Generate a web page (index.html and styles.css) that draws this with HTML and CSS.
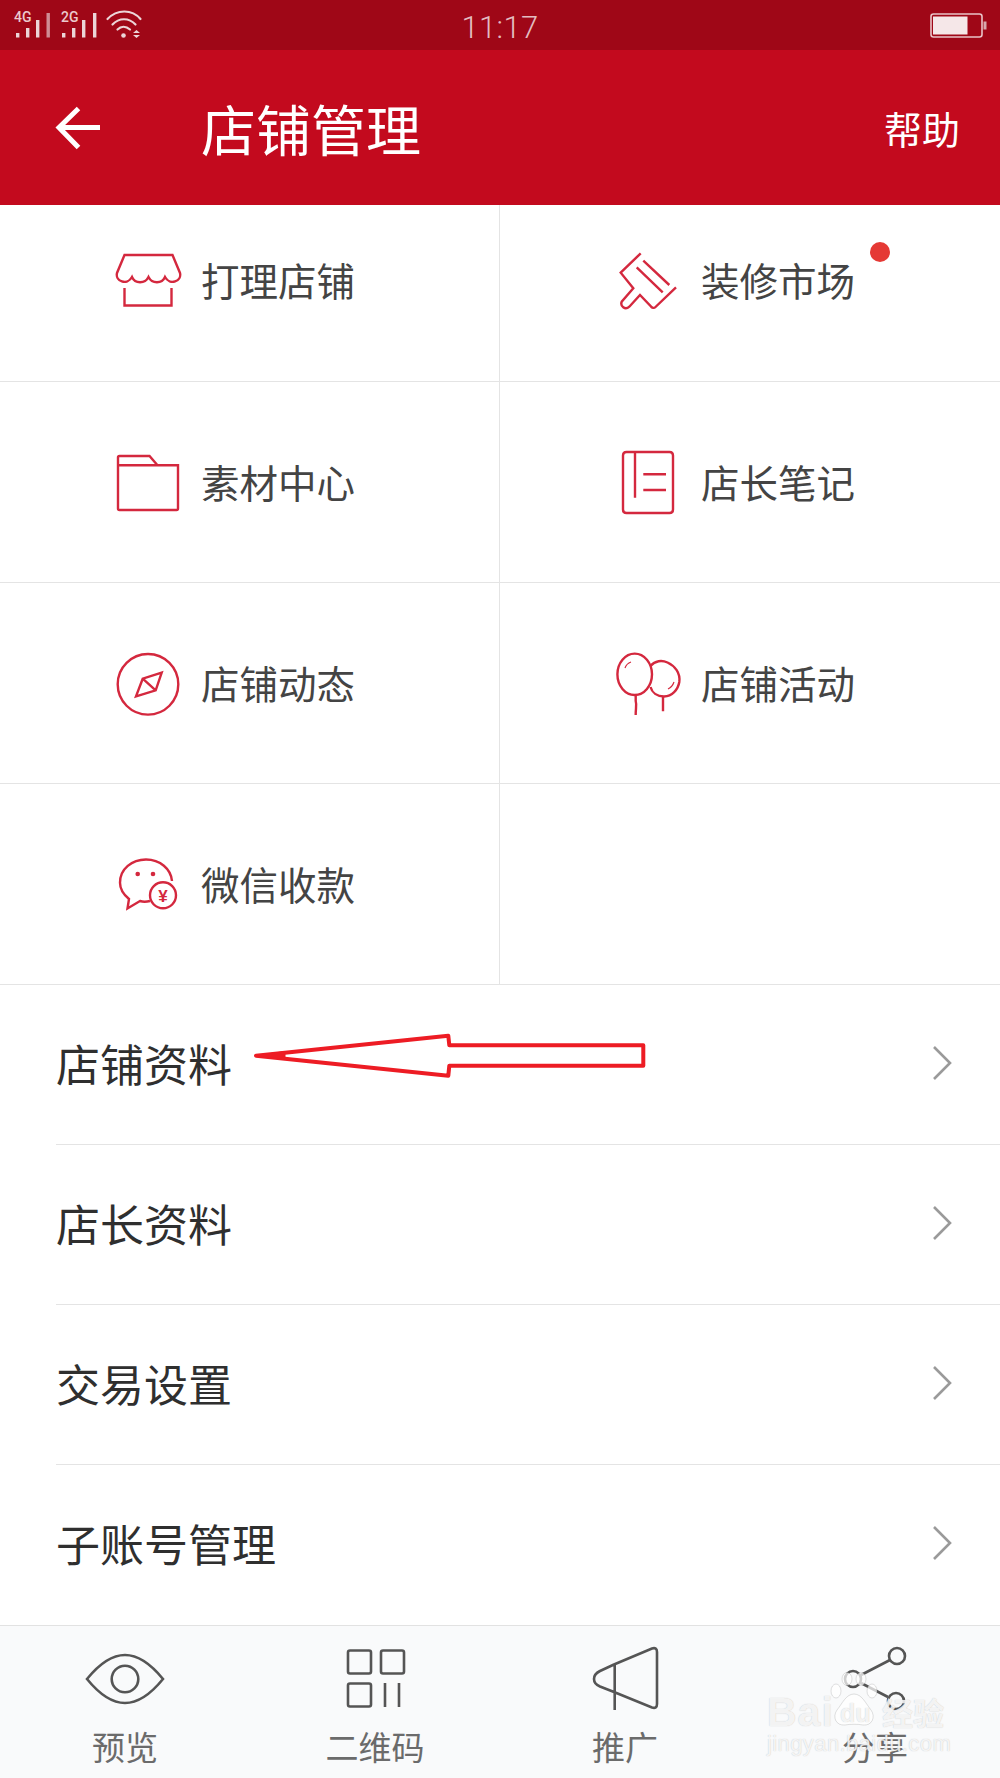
FILE: index.html
```html
<!DOCTYPE html>
<html lang="zh-CN">
<head>
<meta charset="utf-8">
<title>店铺管理</title>
<link rel="stylesheet" href="styles.css">
</head>
<body>
<div class="page">
  <div class="status">
    <svg class="status-left" viewBox="0 0 150 50" width="150" height="50">
      <text class="net" x="14" y="22">4G</text>
      <rect class="sig" x="16" y="33" width="3.4" height="4.5"/>
      <rect class="sig" x="26" y="28" width="3.4" height="9.5"/>
      <rect class="sig" x="36" y="20" width="3.4" height="17.5"/>
      <rect class="sig dim" x="46.5" y="13" width="3.4" height="24.5"/>
      <text class="net" x="61" y="22">2G</text>
      <rect class="sig" x="62" y="33" width="3.4" height="4.5"/>
      <rect class="sig" x="72" y="28" width="3.4" height="9.5"/>
      <rect class="sig" x="82" y="20" width="3.4" height="17.5"/>
      <rect class="sig" x="93" y="13" width="3.4" height="24.5"/>
      <g class="wifi">
        <path d="M107.500 19 C117 9 132 9 140.500 19"/>
        <path d="M112.500 24.500 C119 17.500 129 17.500 135.500 24.500"/>
        <path d="M117.500 29.500 C121 26 126 26 130 29.500"/>
      </g>
      <circle class="sig" cx="123.500" cy="35.500" r="2.300"/>
      <path class="sig" d="M133 33h7l-3.500-3zM133 35h7l-3.500 3z"/>
    </svg>
    <div class="time">11:17</div>
    <svg class="battery" viewBox="0 0 58 26" width="58" height="26">
      <rect class="batt-body" x="1" y="1" width="51" height="23" rx="2.500"/>
      <rect class="batt-fill" x="3" y="3.500" width="34.500" height="18"/>
      <rect class="batt-tip" x="53.500" y="8.500" width="3" height="8"/>
    </svg>
  </div>

  <header class="bar">
    <svg class="back" viewBox="0 0 46 44" width="46" height="44">
      <path d="M45 21.500H5M23.500 2.500 4 21.500 23.500 41.500"/>
    </svg>
    <h1 class="title">店铺管理</h1>
    <span class="help">帮助</span>
  </header>

  <section class="grid">
    <div class="row row-first">
      <a class="cell">
        <svg class="ico" viewBox="0 0 72 72"><path d="M12.500 9H60.500L68 27C70 35 58 40 53 31C50 38 40 38 36.500 31C33 38 23 38 20 31C15 40 3 35 5 27ZM12.500 42V59.500H59.500V42"/></svg>
        <span class="label">打理店铺</span>
      </a>
      <a class="cell">
        <svg class="ico" viewBox="0 0 72 72"><path d="M28.700 7.300 8.700 26.700 21.300 42.300 9.700 55.700C8 60 13 64.500 17.300 60.700L28 49 39 60.500C40 62 42 62.500 43.500 61L64 41.300M31.300 14.700 57.300 39M24.700 21.300 50.700 46.300"/></svg>
        <span class="label">装修市场</span>
        <i class="dot"></i>
      </a>
    </div>
    <div class="row">
      <a class="cell">
        <svg class="ico" viewBox="0 0 72 72"><path d="M6 17.300H66V60.500Q66 62 64.500 62H7.500Q6 62 6 60.500V9.500Q6 8 7.500 8H37.500L45.500 17.300"/></svg>
        <span class="label">素材中心</span>
      </a>
      <a class="cell">
        <svg class="ico" viewBox="0 0 72 72"><path d="M14.500 4H57.500Q61 4 61 7.500V61.500Q61 65 57.500 65H14.500Q11 65 11 61.500V7.500Q11 4 14.500 4ZM23 4V49.700M31.300 26.300H54M31.300 42H54"/></svg>
        <span class="label">店长笔记</span>
      </a>
    </div>
    <div class="row">
      <a class="cell">
        <svg class="ico" viewBox="0 0 72 72"><circle cx="36" cy="35.300" r="30.300"/><path d="M49.700 23.700 43.700 41.300 24 47.300 30.700 29.700ZM30.700 29.700 43.700 41.300"/></svg>
        <span class="label">店铺动态</span>
      </a>
      <a class="cell">
        <svg class="ico" viewBox="0 0 72 72"><ellipse cx="22.700" cy="25.300" rx="17.300" ry="20.700"/><path d="M38.500 17C43 11.500 50 11 55.500 13.500C63 17 68.500 24 67.300 33C66 41 60 47 52 47.500C45 47.500 40 43.500 38.500 38M23.700 46.300V52C25 56 23.500 60 23.700 66M51 48V62.300"/><path class="thin" d="M13 19C14 16 16 14 19 13M62 33C61 36 59 38.500 56 40"/></svg>
        <span class="label">店铺活动</span>
      </a>
    </div>
    <div class="row">
      <a class="cell">
        <svg class="ico" viewBox="0 0 72 72"><path d="M38 51C34 52 31 52 28 51L15.500 58.500 17 49C11 44 8 39 8 32.700C8 19 20 9.500 34 9.500C48 9.500 59 19 60 31"/><circle cx="51" cy="45.300" r="13"/><circle class="solid" cx="25.700" cy="24" r="2.300"/><circle class="solid" cx="41" cy="24" r="2.300"/><text class="yen" x="51" y="51.500">¥</text></svg>
        <span class="label">微信收款</span>
      </a>
      <div class="cell"></div>
    </div>
  </section>

  <section class="list">
    <a class="item"><span class="item-text">店铺资料</span><svg class="chev" viewBox="0 0 20 36"><path d="M2 2 18 18 2 34"/></svg></a>
    <a class="item"><span class="item-text">店长资料</span><svg class="chev" viewBox="0 0 20 36"><path d="M2 2 18 18 2 34"/></svg></a>
    <a class="item"><span class="item-text">交易设置</span><svg class="chev" viewBox="0 0 20 36"><path d="M2 2 18 18 2 34"/></svg></a>
    <a class="item"><span class="item-text">子账号管理</span><svg class="chev" viewBox="0 0 20 36"><path d="M2 2 18 18 2 34"/></svg></a>
  </section>

  <nav class="tabs">
    <a class="tab">
      <svg class="tab-ico" viewBox="0 0 90 70"><path d="M7 34C20 18 32 10 45 10C58 10 70 18 83 34C70 50 58 58 45 58C32 58 20 50 7 34Z"/><circle cx="45" cy="34" r="13.300"/></svg>
      <span class="tab-label">预览</span>
    </a>
    <a class="tab">
      <svg class="tab-ico" viewBox="0 0 90 70"><rect x="18" y="5.500" width="23" height="23" rx="2"/><rect x="51" y="5.500" width="23" height="23" rx="2"/><rect x="18" y="38.500" width="23" height="23" rx="2"/><path d="M55 38V62M69 38V62"/></svg>
      <span class="tab-label">二维码</span>
    </a>
    <a class="tab">
      <svg class="tab-ico" viewBox="0 0 90 70"><path d="M34 19.500 72 3.500Q77 2 77 7V59Q77 64 72 62.500L34 47M34 19.500 20 26C12 30 12 38 20 41.500L34 47M34.700 19V65"/></svg>
      <span class="tab-label">推广</span>
    </a>
    <a class="tab">
      <svg class="tab-ico" viewBox="0 0 90 70"><circle cx="67" cy="11" r="8"/><circle cx="23" cy="34" r="8"/><circle cx="66" cy="56" r="8"/><path d="M31 30 60 15M31 38 58 52"/></svg>
      <span class="tab-label">分享</span>
    </a>
  </nav>

  <svg class="annot" viewBox="0 0 400 50" width="400" height="50">
    <path d="M6 25.700 198.300 5.700 199.300 15.300H393.300V35.700H199.300L198.300 45.700Z"/>
    <path class="annot-tip" d="M6 25.700 35 21.500V29.500Z"/>
  </svg>

  <div class="wm">
    <span class="wm-bai">Bai</span>
    <svg class="wm-paw" viewBox="0 0 52 56" width="52" height="56">
      <ellipse cx="8" cy="19" rx="5" ry="7"/><ellipse cx="19" cy="7" rx="5" ry="6.500"/><ellipse cx="33" cy="7" rx="5" ry="6.500"/><ellipse cx="44" cy="19" rx="5" ry="7"/>
      <path d="M26 22C18 22 14 32 9 38C4 45 8 54 17 53C22 52 30 52 35 53C44 54 48 45 43 38C38 32 34 22 26 22Z"/>
    </svg>
    <span class="wm-du">du</span>
    <span class="wm-jy">经验</span>
    <span class="wm-url">jingyan.baidu.com</span>
  </div>
</div>
</body>
</html>
```

FILE: styles.css
```css
* { box-sizing: border-box; }
html, body { margin: 0; padding: 0; background: #fff; }
.page {
  position: relative;
  width: 1000px;
  height: 1778px;
  overflow: hidden;
  display: flex;
  flex-direction: column;
  font-family: "Noto Sans CJK SC", "Noto Sans", sans-serif;
  font-weight: 400;
}

/* status bar */
.status {
  height: 50px;
  background: #9f0717;
  display: flex;
  align-items: center;
  justify-content: space-between;
  position: relative;
  flex: none;
}
.status-left { display: block; }
.net { font: 500 14px Roboto, sans-serif; fill: #ecc9cd; }
.sig { fill: #ecd5d8; }
.sig.dim { fill: #cf8d95; }
.wifi path { fill: none; stroke: #ecd5d8; stroke-width: 2.2; stroke-linecap: round; }
.time {
  position: absolute;
  left: 0;
  right: 0;
  top: 3px;
  text-align: center;
  font: 300 31px/50px Roboto, sans-serif;
  color: #e3bcc0;
  letter-spacing: 0.3px;
}
.battery { margin-right: 12px; margin-top: 2px; }
.batt-body { fill: none; stroke: #e9c4c8; stroke-width: 1.6; }
.batt-fill { fill: #f5e7e8; }
.batt-tip { fill: #d8a7ac; }

/* header */
.bar {
  height: 155px;
  background: #c30a1e;
  display: flex;
  align-items: center;
  flex: none;
  padding: 0 40px 0 55px;
  color: #fff;
}
.back { flex: none; }
.back path { fill: none; stroke: #fff; stroke-width: 5; }
.title {
  margin: 0 0 0 100px;
  font-size: 55px;
  font-weight: 400;
  line-height: 1;
}
.help { margin-left: auto; font-size: 38px; line-height: 1; }

/* grid */
.grid { flex: none; }
.row {
  height: 201px;
  display: grid;
  grid-template-columns: 499px 501px;
  border-bottom: 1px solid #e4e4e4;
}
.row-first { height: 177px; }
.cell {
  position: relative;
  display: flex;
  align-items: center;
  gap: 17px;
  padding: 4px 0 0 112px;
}
.row-first .cell { padding-top: 0; padding-bottom: 22px; }
.cell + .cell { border-left: 1px solid #e4e4e4; padding-left: 112px; }
.ico { width: 72px; height: 72px; flex: none; }
.ico path, .ico circle, .ico ellipse { fill: none; stroke: #d4283e; stroke-width: 2.4; }
.ico .solid { fill: #d4283e; stroke: none; }
.ico .thin { stroke-width: 1.2; }
.yen { font: 700 17px "Liberation Sans", sans-serif; fill: #d4283e; text-anchor: middle; }
.label { font-size: 38.5px; line-height: 1; color: #444; margin-top: -6px; }
.dot {
  position: absolute;
  left: 370px;
  top: 37px;
  width: 20px;
  height: 20px;
  border-radius: 50%;
  background: #e53935;
}

/* list */
.list { flex: 1; }
.item {
  height: 160px;
  margin-left: 56px;
  padding: 0 48px 4px 0;
  border-bottom: 1px solid #e4e4e4;
  display: flex;
  align-items: center;
  justify-content: space-between;
}
.item:last-child { border-bottom: 0; }
.item-text { font-size: 44px; line-height: 1; color: #2f2f2f; }
.chev { width: 20px; height: 36px; flex: none; }
.chev path { fill: none; stroke: #9a9a9a; stroke-width: 2.6; }

/* tabs */
.tabs {
  height: 154px;
  flex: none;
  background: #f9fafb;
  border-top: 1px solid #e2e2e2;
  display: grid;
  grid-template-columns: repeat(4, 250px);
  padding-top: 19px;
}
.tab { display: flex; flex-direction: column; align-items: center; }
.tab-ico { width: 90px; height: 70px; flex: none; }
.tab-ico path, .tab-ico rect, .tab-ico circle { fill: none; stroke: #555; stroke-width: 2.6; }
.tab-label { font-size: 33px; line-height: 1; color: #6b6b6b; margin-top: 15px; }

/* overlays */
.annot { position: absolute; left: 250px; top: 1030px; }
.annot path { fill: none; stroke: #ed1c24; stroke-width: 4; stroke-linejoin: round; }
.annot .annot-tip { fill: #ed1c24; stroke-width: 1; }

.wm { position: absolute; left: 760px; top: 1665px; width: 200px; height: 100px; pointer-events: none; }
.wm span {
  position: absolute;
  color: rgba(255, 255, 255, 0.82);
  text-shadow: 0 0 1px rgba(120, 120, 120, 0.45);
  line-height: 1;
  white-space: nowrap;
}
.wm-bai { left: 7px; top: 27px; font: 700 41px/1 "Liberation Sans", sans-serif; letter-spacing: 1px; }
.wm-paw { position: absolute; left: 68px; top: 7px; }
.wm-paw ellipse, .wm-paw path { fill: rgba(255, 255, 255, 0.72); stroke: rgba(130, 130, 130, 0.25); stroke-width: 1; }
.wm-du { left: 80px; top: 36px; font: 700 25px/1 "Liberation Sans", sans-serif; }
.wm-jy { left: 122px; top: 31px; font-size: 31px; font-weight: 700; }
.wm-url { left: 7px; top: 68px; font: 400 22px/1 "Liberation Sans", sans-serif; letter-spacing: 0.4px; }
```
